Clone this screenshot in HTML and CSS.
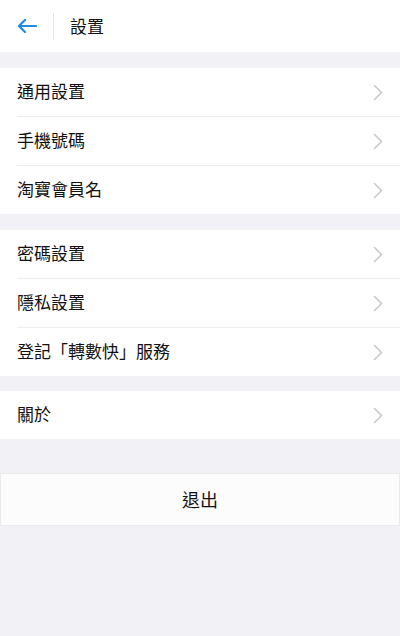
FILE: index.html
```html
<!DOCTYPE html>
<html lang="zh-Hant">
<head>
<meta charset="utf-8">
<link rel="stylesheet" href="styles.css">
</head>
<body>
<header class="topbar">
  <span class="back">
    <svg width="20" height="14" viewBox="0 0 20 14"><path d="M19 7H2M8 1L2 7l6 6" fill="none" stroke="#1e8ae6" stroke-width="2.2" stroke-linecap="round" stroke-linejoin="round"/></svg>
  </span>
  <span class="vdiv"></span>
  <span class="title">設置</span>
</header>

<section class="group g1">
  <div class="row"><span class="label">通用設置</span><svg class="chev" width="10" height="17" viewBox="0 0 10 17"><path d="M1 1l7.5 7.5L1 16" fill="none" stroke="#c8c8cc" stroke-width="1.5"/></svg></div>
  <div class="row"><span class="label">手機號碼</span><svg class="chev" width="10" height="17" viewBox="0 0 10 17"><path d="M1 1l7.5 7.5L1 16" fill="none" stroke="#c8c8cc" stroke-width="1.5"/></svg></div>
  <div class="row"><span class="label">淘寶會員名</span><svg class="chev" width="10" height="17" viewBox="0 0 10 17"><path d="M1 1l7.5 7.5L1 16" fill="none" stroke="#c8c8cc" stroke-width="1.5"/></svg></div>
</section>

<section class="group g2">
  <div class="row"><span class="label">密碼設置</span><svg class="chev" width="10" height="17" viewBox="0 0 10 17"><path d="M1 1l7.5 7.5L1 16" fill="none" stroke="#c8c8cc" stroke-width="1.5"/></svg></div>
  <div class="row"><span class="label">隱私設置</span><svg class="chev" width="10" height="17" viewBox="0 0 10 17"><path d="M1 1l7.5 7.5L1 16" fill="none" stroke="#c8c8cc" stroke-width="1.5"/></svg></div>
  <div class="row"><span class="label">登記「轉數快」服務</span><svg class="chev" width="10" height="17" viewBox="0 0 10 17"><path d="M1 1l7.5 7.5L1 16" fill="none" stroke="#c8c8cc" stroke-width="1.5"/></svg></div>
</section>

<section class="group g3">
  <div class="row"><span class="label">關於</span><svg class="chev" width="10" height="17" viewBox="0 0 10 17"><path d="M1 1l7.5 7.5L1 16" fill="none" stroke="#c8c8cc" stroke-width="1.5"/></svg></div>
</section>

<div class="logout"><span class="logout-text">退出</span></div>
</body>
</html>
```

FILE: styles.css
```css
html, body {
  margin: 0;
  padding: 0;
}
body {
  width: 400px;
  min-height: 636px;
  background: #f2f2f6;
  font-family: "Noto Sans CJK TC", "Noto Sans CJK SC", "Noto Sans", sans-serif;
  color: #111;
}
.topbar {
  height: 52px;
  background: #fff;
  display: flex;
  align-items: center;
}
.back {
  width: 20px;
  height: 14px;
  margin-left: 17px;
  display: flex;
}
.vdiv {
  width: 1px;
  height: 27px;
  background: #e4e4e4;
  margin-left: 16px;
}
.title {
  margin-left: 16px;
  font-size: 17px;
  line-height: 1;
  padding-bottom: 2px;
}
.group {
  background: #fff;
}
.g1 { margin-top: 16px; }
.g2 { margin-top: 16px; }
.g3 { margin-top: 15px; }
.row {
  height: 48px;
  display: flex;
  align-items: center;
  justify-content: space-between;
  padding: 0 17px;
  font-size: 17px;
  position: relative;
}
.label {
  line-height: 1;
  padding-bottom: 3px;
}
.group .row + .row {
  margin-top: 1px;
}
.group .row + .row::before {
  content: "";
  position: absolute;
  left: 17px;
  right: 0;
  top: -1px;
  height: 1px;
  background: #ececec;
}
.logout {
  margin-top: 34px;
  height: 51px;
  background: #fcfcfc;
  border: 1px solid #ebebeb;
  display: flex;
  align-items: center;
  justify-content: center;
  font-size: 18px;
  color: #111;
}
.logout-text {
  line-height: 1;
  padding-bottom: 2px;
}
```
